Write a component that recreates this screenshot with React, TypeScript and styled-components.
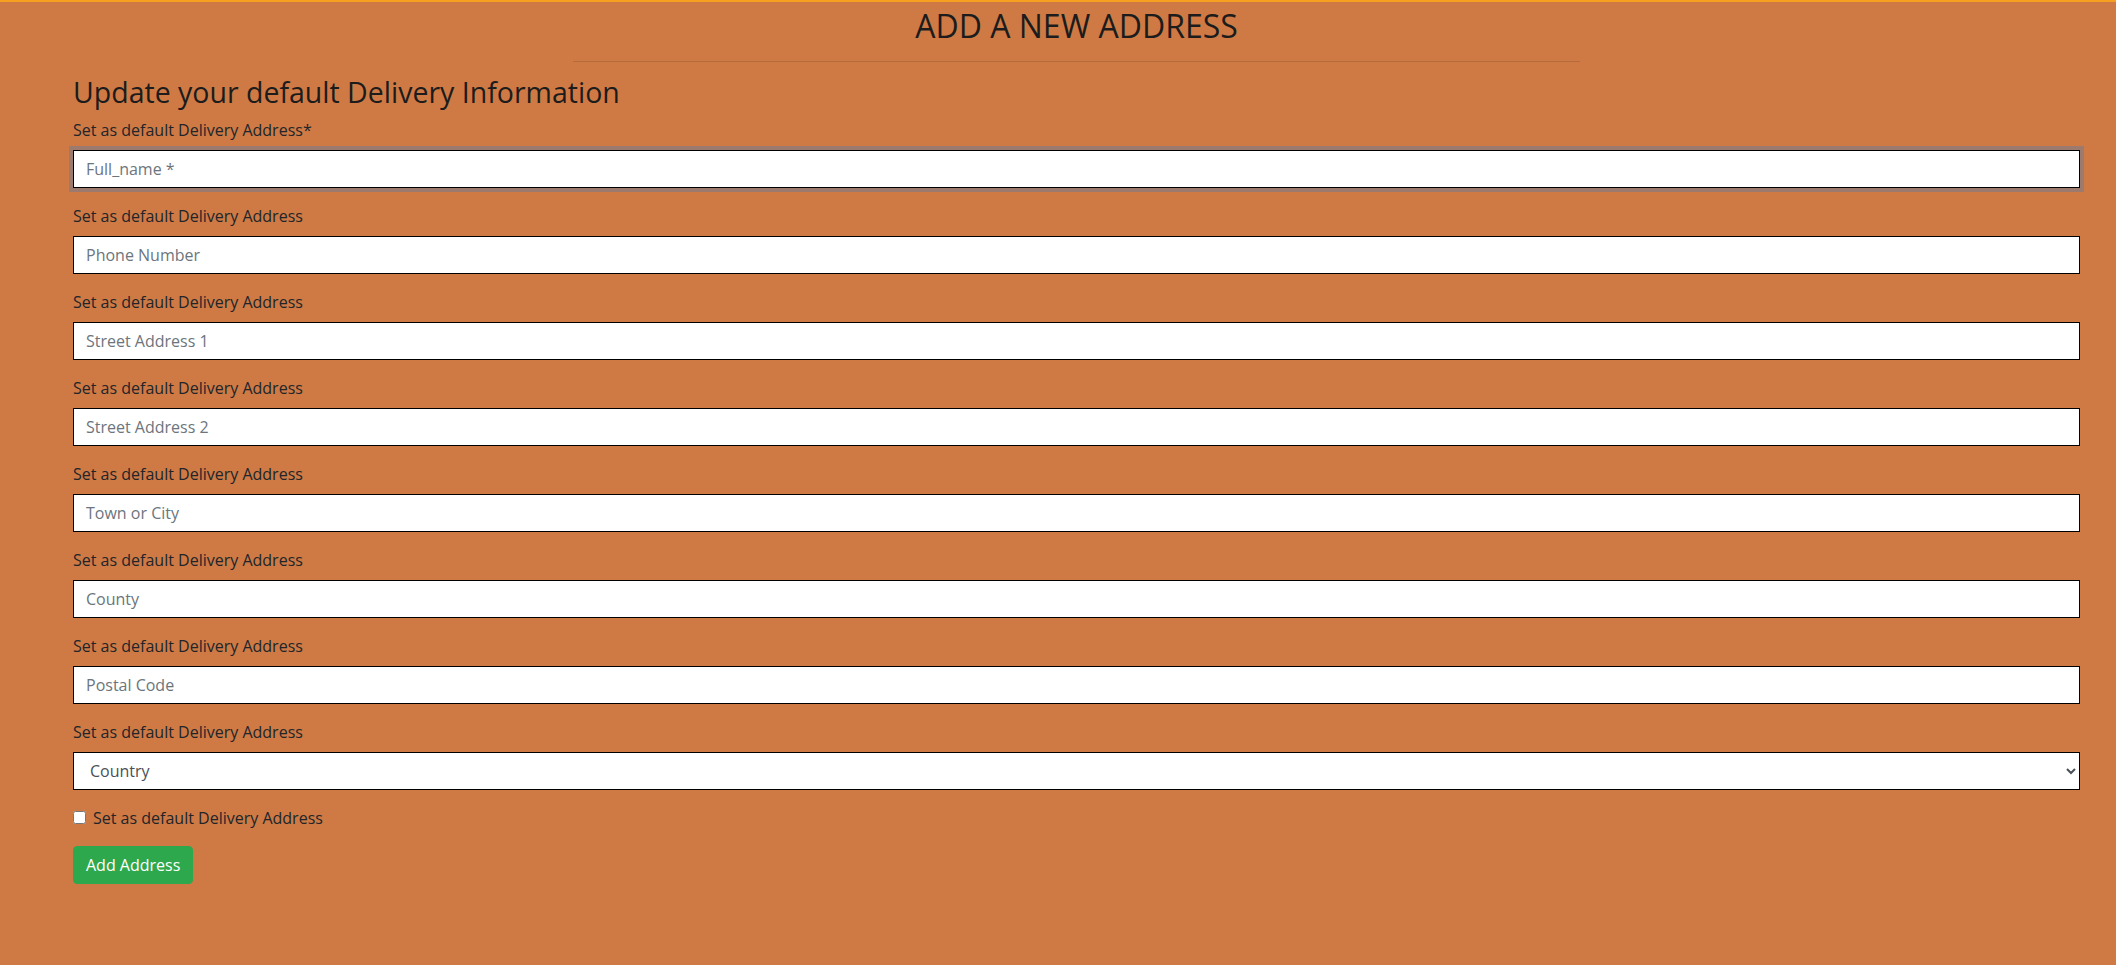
import React from "react";
import styled, { createGlobalStyle } from "styled-components";

const GlobalStyle = createGlobalStyle`
  html, body {
    margin: 0;
    padding: 0;
    background: #cf7a45;
  }
  body {
    font-family: "Open Sans", "Noto Sans", sans-serif;
    font-size: 16px;
    line-height: 1.5;
    color: #212529;
    min-height: 965px;
    border-top: 2px solid #f7a020;
    box-sizing: border-box;
  }
  *, *::before, *::after { box-sizing: border-box; }
`;

const Page = styled.div`
  padding: 0 36px 40px 73px;
`;

const Title = styled.h2`
  margin: 5px 0 0;
  font-size: 32px;
  font-weight: 400;
  line-height: 1.2;
  text-align: center;
  color: #1c1c1c;
`;

const Rule = styled.hr`
  width: 50.2%;
  margin: 16px auto 14px;
  border: 0;
  border-top: 1px solid rgba(0, 0, 0, 0.12);
`;

const Subtitle = styled.h3`
  margin: 0 0 8px;
  font-size: 28.5px;
  font-weight: 400;
  line-height: 33.6px;
  color: #1c1c1c;
`;

const Form = styled.form`
  display: flex;
  flex-direction: column;
`;

const Group = styled.div`
  display: flex;
  flex-direction: column;
  margin-bottom: 16px;
`;

const Label = styled.label`
  margin-bottom: 8px;
  line-height: 24px;
`;

const Input = styled.input<{ $focused?: boolean }>`
  display: block;
  width: 100%;
  height: 38px;
  padding: 6px 12px;
  font-family: inherit;
  font-size: 16px;
  line-height: 1.5;
  color: #495057;
  background: #fff;
  border: 1px solid #000;
  border-radius: 0;
  outline: none;
  box-shadow: ${(p) => (p.$focused ? "0 0 0 4px #9c7b6e" : "none")};
  &::placeholder {
    color: #6c757d;
  }
`;

const Select = styled.select`
  display: block;
  width: 100%;
  height: 38px;
  padding: 6px 8px 6px 12px;
  font-family: inherit;
  font-size: 16px;
  line-height: 1.5;
  color: #495057;
  background: #fff;
  border: 1px solid #000;
  border-radius: 0;
  outline: none;
`;

const CheckRow = styled.div`
  display: flex;
  align-items: flex-start;
  margin-bottom: 16px;
  line-height: 24px;
`;

const Check = styled.input`
  width: 13px;
  height: 13px;
  margin: 5px 7px 0 0;
  flex: none;
`;

const ButtonRow = styled.div`
  display: flex;
`;

const Button = styled.button`
  padding: 6px 12px;
  font-family: inherit;
  font-size: 16px;
  line-height: 1.5;
  color: #fff;
  background: #2ea84c;
  border: 1px solid #2ea84c;
  border-radius: 4px;
  cursor: pointer;
`;

const fields = [
  { label: "Set as default Delivery Address*", placeholder: "Full_name *", focused: true },
  { label: "Set as default Delivery Address", placeholder: "Phone Number" },
  { label: "Set as default Delivery Address", placeholder: "Street Address 1" },
  { label: "Set as default Delivery Address", placeholder: "Street Address 2" },
  { label: "Set as default Delivery Address", placeholder: "Town or City" },
  { label: "Set as default Delivery Address", placeholder: "County" },
  { label: "Set as default Delivery Address", placeholder: "Postal Code" },
];

export default function App() {
  return (
    <>
      <GlobalStyle />
      <Page>
        <Title>ADD A NEW ADDRESS</Title>
        <Rule />
        <Subtitle>Update your default Delivery Information</Subtitle>
        <Form onSubmit={(e) => e.preventDefault()}>
          {fields.map((f, i) => (
            <Group key={i}>
              <Label>{f.label}</Label>
              <Input placeholder={f.placeholder} $focused={f.focused} />
            </Group>
          ))}
          <Group>
            <Label>Set as default Delivery Address</Label>
            <Select defaultValue="">
              <option value="">Country</option>
              <option value="GB">United Kingdom</option>
              <option value="IE">Ireland</option>
            </Select>
          </Group>
          <CheckRow>
            <Check type="checkbox" id="default" />
            <label htmlFor="default">Set as default Delivery Address</label>
          </CheckRow>
          <ButtonRow>
            <Button type="submit">Add Address</Button>
          </ButtonRow>
        </Form>
      </Page>
    </>
  );
}
